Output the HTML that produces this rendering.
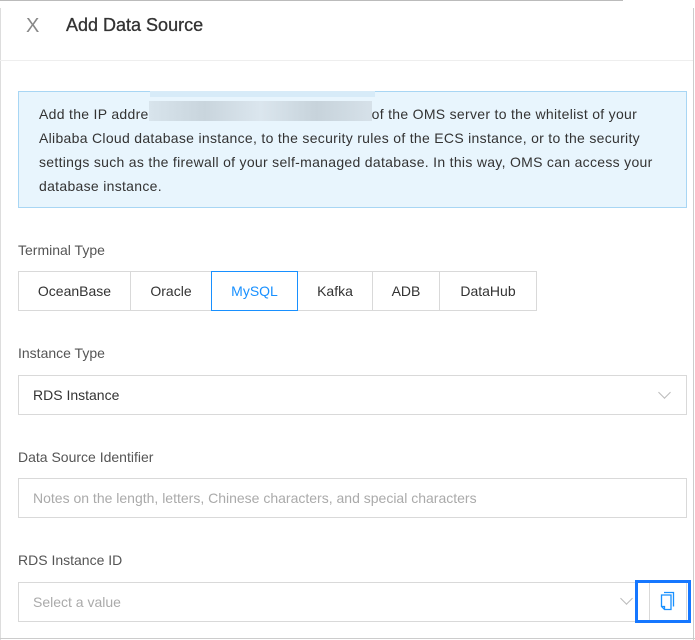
<!DOCTYPE html>
<html><head><style>
*{box-sizing:border-box;margin:0;padding:0}
body{width:695px;height:640px;background:#fff;font-family:"Liberation Sans",sans-serif;color:#333;position:relative;overflow:hidden;font-size:14px}
.a{position:absolute}
.lbl{position:absolute;left:18px;font-size:14px;color:#555}
.box{position:absolute;left:18px;border:1px solid #d9d9d9;height:40px;background:#fff}
.ph{color:#aaa}
.btn{position:absolute;top:271px;height:40px;border:1px solid #d9d9d9;text-align:center;line-height:38px;font-size:14px;color:#333;background:#fff}
.chev{position:absolute;width:9px;height:9px;border-right:1px solid #bbb;border-bottom:1px solid #bbb;transform:rotate(45deg)}
</style></head><body>
<div class="a" style="left:0;top:0;width:623px;height:1px;background:#bbb"></div>
<div class="a" style="left:693px;top:8px;width:1px;height:632px;background:#ccc"></div>
<div class="a" style="left:0;top:8px;width:1px;height:632px;background:#ddd"></div>
<div class="a" style="left:0;top:638px;width:695px;height:1px;background:#ccc"></div>
<div class="a" style="left:26px;top:15px;font-size:20px;color:#888;font-weight:300">X</div>
<div class="a" style="left:66px;top:15px;font-size:18px;color:#333;-webkit-text-stroke:0.3px #333">Add Data Source</div>
<div class="a" style="left:0;top:60px;width:693px;height:1px;background:#eee"></div>
<div class="a" style="left:18px;top:91px;width:669px;height:117px;background:#e8f5fd;border:1px solid #a8d6f4;padding:10px 0 0 20px;line-height:24px;font-size:14px;color:#333;white-space:nowrap;letter-spacing:0.3px">Add the IP addre<span style="display:inline-block;width:223px;height:20px;vertical-align:middle;background:linear-gradient(90deg,#d8e4ec,#c9d5dd,#dbe6ee,#c7d3db,#d6e1e9);margin-top:-8px"></span>of the OMS server to the whitelist of your<br>Alibaba Cloud database instance, to the security rules of the ECS instance, or to the security<br>settings such as the firewall of your self-managed database. In this way, OMS can access your<br>database instance.</div>
<div class="a" style="left:150px;top:91px;width:225px;height:6px;background:#d7ebf8"></div>
<div class="lbl" style="top:242px">Terminal Type</div>
<div class="btn" style="left:18px;width:113px">OceanBase</div>
<div class="btn" style="left:130px;width:82px">Oracle</div>
<div class="btn" style="left:297px;width:76px">Kafka</div>
<div class="btn" style="left:372px;width:68px">ADB</div>
<div class="btn" style="left:439px;width:98px">DataHub</div>
<div class="btn" style="left:211px;width:87px;border-color:#1890ff;color:#1890ff">MySQL</div>
<div class="lbl" style="top:345px">Instance Type</div>
<div class="box" style="top:375px;width:669px;padding:0 14px;line-height:38px">RDS Instance</div>
<div class="chev" style="left:660px;top:388px"></div>
<div class="lbl" style="top:449px">Data Source Identifier</div>
<div class="box ph" style="top:478px;width:669px;padding:0 14px;line-height:38px">Notes on the length, letters, Chinese characters, and special characters</div>
<div class="lbl" style="top:552px">RDS Instance ID</div>
<div class="box ph" style="top:582px;width:669px;padding:0 14px;line-height:38px">Select a value</div>
<div class="chev" style="left:622px;top:594px"></div>
<div class="a" style="left:649px;top:583px;width:1px;height:38px;background:#d9d9d9"></div>
<div class="a" style="left:635px;top:580px;width:56px;height:43px;border:3px solid #1677ff"></div>
<svg class="a" style="left:658px;top:590px" width="20" height="24" viewBox="0 0 20 24"><path d="M6 2.5h9.5v14" fill="none" stroke="#1890ff" stroke-width="1.3"/><path d="M3.5 5h9.5v14.5H6.5L3.5 16.5z" fill="none" stroke="#1890ff" stroke-width="1.3"/><path d="M3.5 16.5h3v3" fill="none" stroke="#1890ff" stroke-width="1.3"/></svg>
</body></html>
